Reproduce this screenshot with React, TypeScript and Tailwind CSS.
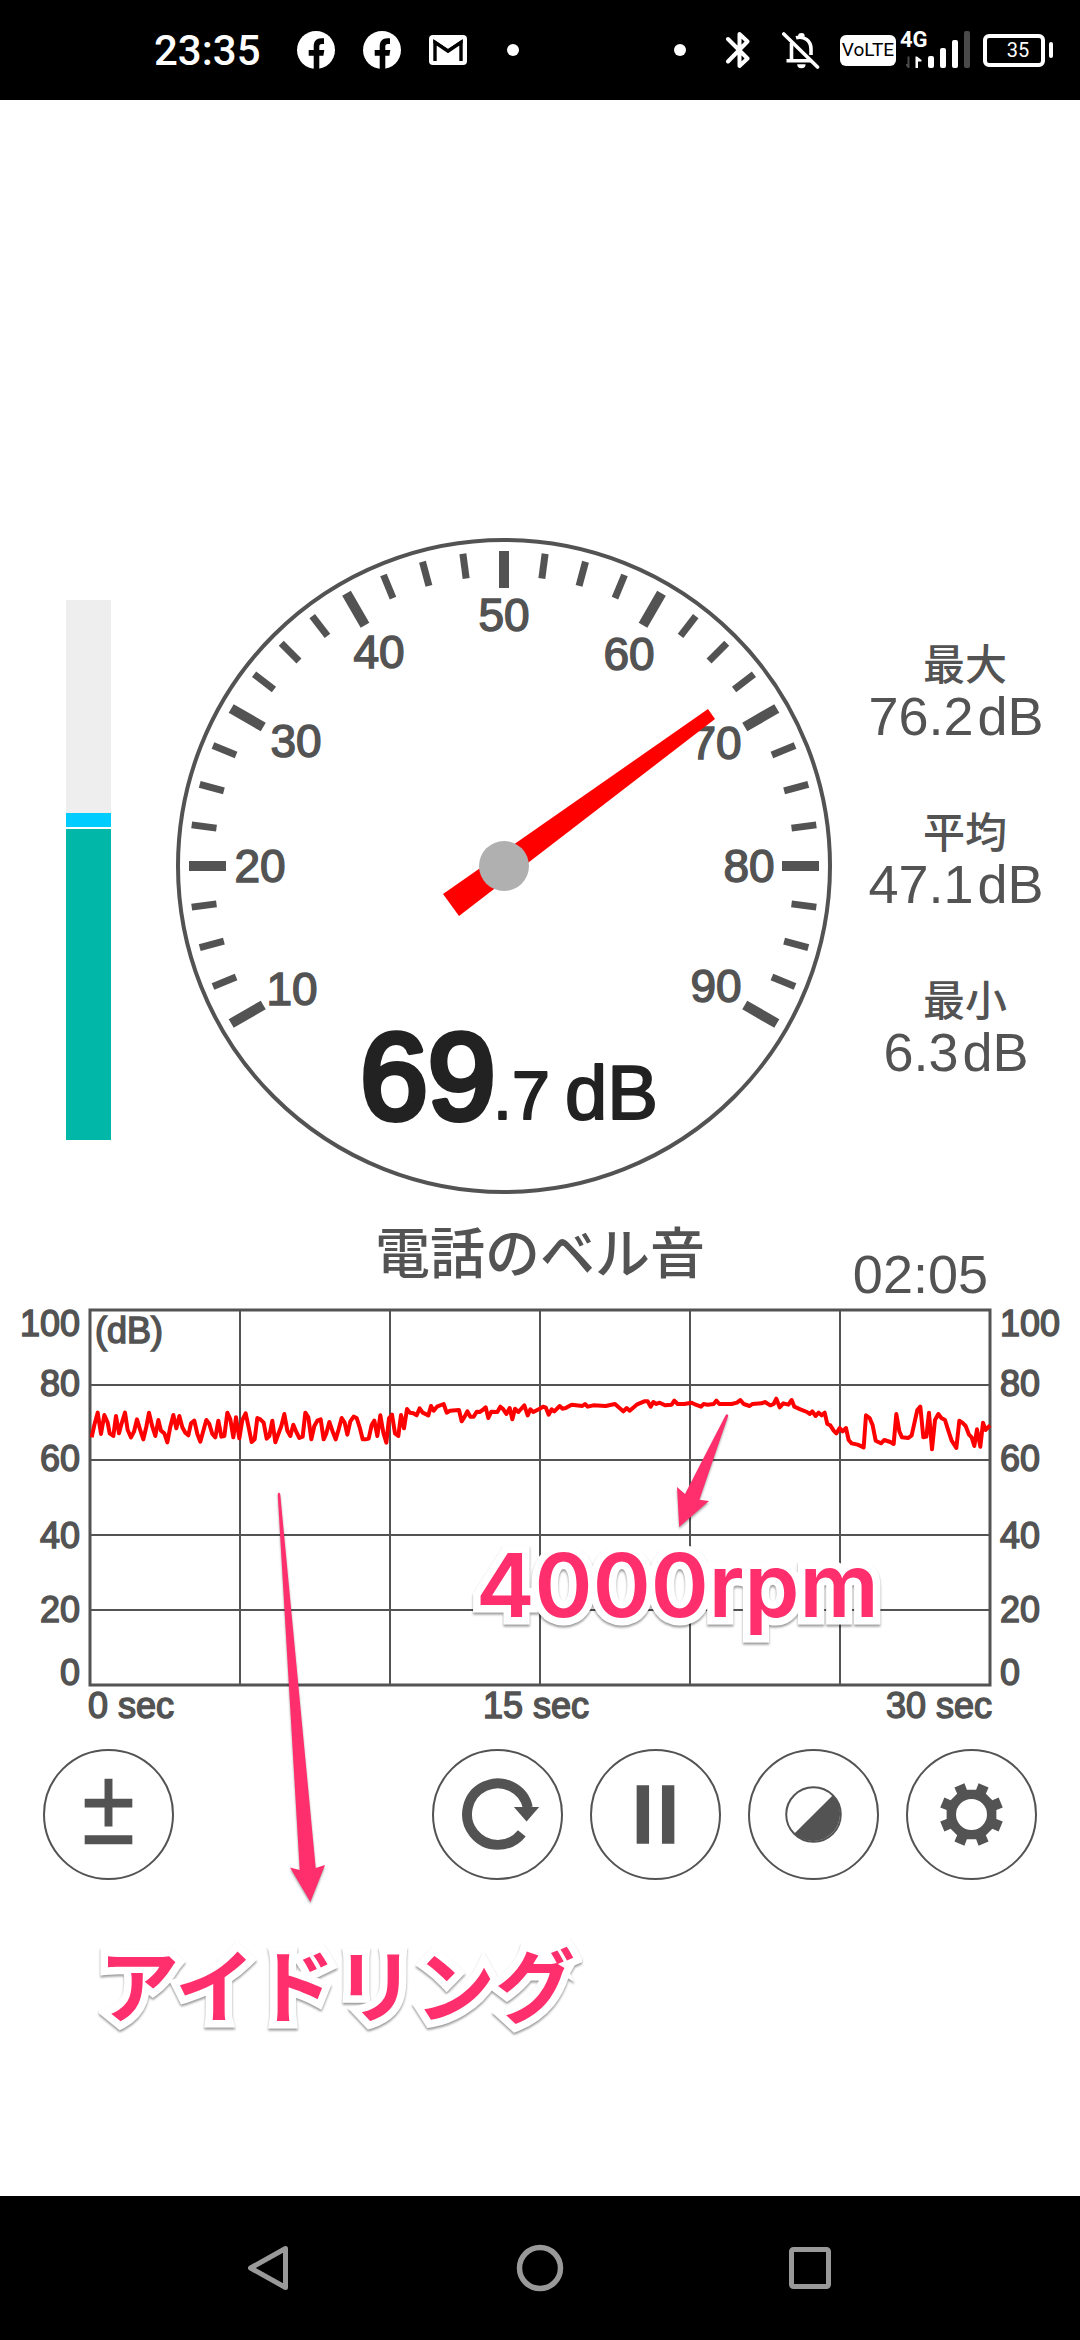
import React from "react";

const INK = "#535353";
const PINK = "#ff2e6c";

/* ---------- status bar ---------- */

function FacebookIcon() {
  return (
    <svg viewBox="0 0 38 38" className="size-[38px]" aria-label="Facebook">
      <circle cx="19" cy="19" r="19" fill="#fff" />
      <path
        d="M16.7 38V24.7H11.7V19H16.7V15.4C16.7 10.4 19.4 7.3 24.4 7.3H27V12.9H24.8C23 12.9 22.3 13.9 22.3 15.4V19H27.3L26.4 24.7H22.3V38Z"
        fill="#000"
      />
    </svg>
  );
}

function GmailIcon() {
  return (
    <svg viewBox="0 0 38 30" className="h-[30px] w-[38px]" aria-label="Gmail">
      <rect width="38" height="30" rx="4" fill="#fff" />
      <path d="M6 26V7.4L19 16.2L32 7.4V26" fill="none" stroke="#000" strokeWidth="3.4" />
      <path d="M4.4 4.2L19 14L33.6 4.2V8.2L19 17L4.4 8.2Z" fill="#000" />
    </svg>
  );
}

function BluetoothIcon() {
  return (
    <svg viewBox="0 0 24 38" className="h-[38px] w-6" aria-label="Bluetooth">
      <path
        d="M2 8L21.5 27.5L13.5 35V3L21.5 10.5L2 30.5"
        fill="none"
        stroke="#fff"
        strokeWidth="4"
        strokeLinecap="round"
        strokeLinejoin="round"
      />
    </svg>
  );
}

function MutedBellIcon() {
  return (
    <svg viewBox="0 0 38 38" className="size-[38px]" aria-label="Muted">
      <g fill="none" stroke="#fff" strokeWidth="3.6">
        <path d="M9.5 12V29.5M4.5 29.7H29" />
        <path d="M14 6.8C22 4.5 29 9.5 29 18V24" />
        <path d="M1.8 3L35.5 36" strokeLinecap="round" />
      </g>
      <path d="M16 5.5A3.4 3.4 0 0 1 22.8 5.5ZM15.2 33.2H23.6A4.2 4 0 0 1 15.2 33.2Z" fill="#fff" />
    </svg>
  );
}

function StatusBar() {
  return (
    <header className="flex h-[100px] items-center justify-between bg-black pr-[27px] pl-[154px] text-white">
      <div className="flex items-center">
        <time className="font-[Roboto,sans-serif] text-[42px] font-medium">23:35</time>
        <div className="ml-9 flex items-center gap-7">
          <FacebookIcon />
          <FacebookIcon />
          <GmailIcon />
        </div>
        <span className="ml-10 size-3 rounded-full bg-white" />
      </div>
      <div className="flex items-center">
        <span className="mr-10 size-3 rounded-full bg-white" />
        <BluetoothIcon />
        <div className="mr-5 ml-8">
          <MutedBellIcon />
        </div>
        <span className="flex h-[31px] w-14 items-center justify-center rounded-md bg-white font-[Roboto,sans-serif] text-[19px] text-black">
          VoLTE
        </span>
        <div className="relative ml-1 h-10 w-[71px]">
          <svg viewBox="0 0 71 40" className="h-10 w-[71px]" aria-label="Signal">
            <path d="M9.5 26.5V38H8L6 35.5V34H7.5V26.5Z" fill="#4a4a4a" />
            <path d="M15.5 38V26.5H17L21.5 30V31.5H18V38Z" fill="#fff" />
            <rect x="28" y="26" width="6" height="12" rx="2" fill="#fff" />
            <rect x="40" y="18" width="6" height="20" rx="2" fill="#fff" />
            <rect x="52" y="10" width="6" height="28" rx="2" fill="#fff" />
            <rect x="64" y="1" width="6" height="37" rx="2" fill="#4a4a4a" />
          </svg>
          <span className="absolute top-0 left-0 font-[Roboto,sans-serif] text-[22px] leading-5 font-bold">4G</span>
        </div>
        <span className="ml-3 flex h-[33px] w-[62px] items-center justify-center rounded-md border-4 border-white pl-2 font-[Roboto,sans-serif] text-xl">
          35
        </span>
        <span className="ml-1 h-4 w-1 rounded-sm bg-white" />
      </div>
    </header>
  );
}

/* ---------- gauge ---------- */

const DIAL_LABELS = [
  { text: "10", x: 292, y: 989 },
  { text: "20", x: 260, y: 866 },
  { text: "30", x: 296, y: 741 },
  { text: "40", x: 379, y: 652 },
  { text: "50", x: 504, y: 615 },
  { text: "60", x: 629, y: 654 },
  { text: "70", x: 716, y: 743 },
  { text: "80", x: 749, y: 866 },
  { text: "90", x: 716, y: 986 },
];

const TICKS = Array.from({ length: 33 }, (_, i) => ({
  angle: -120 + i * 7.5,
  major: i % 4 === 0,
}));

function Gauge() {
  return (
    <svg viewBox="176 538 656 656" className="w-full" role="img" aria-label="69.7 dB">
      <circle cx="504" cy="866" r="326" fill="none" stroke={INK} strokeWidth="4" />
      {TICKS.map(({ angle, major }) => (
        <line
          key={angle}
          x1="504"
          x2="504"
          y1="551"
          y2={major ? 588 : 576}
          stroke={INK}
          strokeWidth={major ? 10 : 7}
          transform={`rotate(${angle} 504 866)`}
        />
      ))}
      <g
        fill={INK}
        stroke={INK}
        strokeWidth="1.5"
        fontSize="46"
        textAnchor="middle"
        className="font-['Liberation_Sans',sans-serif]"
      >
        {DIAL_LABELS.map(({ text, x, y }) => (
          <text key={text} x={x} y={y + 16}>
            {text}
          </text>
        ))}
      </g>
      <path d="M708 709L715 719L459 916L443 894Z" fill="#ff0000" />
      <circle cx="504" cy="866" r="25" fill="#b0b0b0" />
      <g
        fill="#222"
        stroke="#222"
        strokeLinejoin="round"
        className="font-['Liberation_Sans',sans-serif]"
      >
        <text x="360" y="1119" fontSize="122" strokeWidth="6">
          69
        </text>
        <text x="493" y="1119" fontSize="68" strokeWidth="2">
          .7
        </text>
        <text x="565" y="1119" fontSize="76" strokeWidth="2">
          dB
        </text>
      </g>
    </svg>
  );
}

function LevelBar() {
  return (
    <div className="flex h-[540px] w-[45px] flex-col" role="img" aria-label="Level">
      <div className="flex-[213] bg-[#eeeeee]" />
      <div className="mb-0.5 flex-[14] bg-[#00ccff]" />
      <div className="flex-[311] bg-[#00b7a8]" />
    </div>
  );
}

function Stat({ label, value }: { label: string; value: string }) {
  return (
    <div className="flex flex-col items-center">
      <dt className="pl-[18px] font-['Noto_Sans_CJK_JP',sans-serif] text-[42px] leading-[52px] font-medium">
        {label}
      </dt>
      <dd className="flex gap-1 text-[54px] leading-[56px]">
        <span>{value}</span>
        <span>dB</span>
      </dd>
    </div>
  );
}

/* ---------- history chart ---------- */

/* Trace vertices, in thirds of a chart unit, counted from (85, 90). */
const TRACE =
  "20,142 28,105 38,68 48,132 58,75 68,98 74,130 85,138 93,78 102,130 110,100 120,68 128,120 138,142 147,125 156,88 165,118 175,148 184,110 192,68 202,110 211,138 220,90 228,122 238,130 247,157 256,110 265,75 274,115 283,78 292,112 301,128 310,136 318,100 328,92 337,132 346,155 355,122 364,90 373,102 382,132 391,142 400,92 409,140 418,138 427,68 436,88 445,142 453,82 463,145 472,90 482,70 491,112 500,156 509,148 517,84 526,88 536,98 545,146 553,138 562,92 571,157 580,132 589,108 598,72 607,122 616,138 625,104 634,126 643,144 653,140 661,68 670,82 679,148 688,108 697,92 707,88 716,148 724,130 733,96 742,122 752,148 761,118 770,84 779,98 787,134 796,94 806,80 815,84 824,112 833,148 842,148 851,146 860,105 868,92 877,138 886,76 895,128 904,158 912,85 921,74 930,130 940,138 948,75 957,115 966,57 975,68 985,70 995,76 1004,55 1013,68 1030,76 1038,48 1046,62 1056,50 1076,42 1085,68 1095,62 1122,60 1130,94 1139,80 1147,64 1156,80 1166,80 1175,65 1184,66 1193,60 1202,52 1210,84 1219,65 1237,66 1246,50 1255,58 1264,72 1274,54 1282,88 1290,56 1300,66 1318,46 1328,76 1336,58 1345,66 1364,56 " +
  "1374,50 1382,52 1391,74 1400,58 1408,64 1424,48 1432,56 1442,54 1460,44 1492,48 1500,42 1508,50 1525,46 1562,48 1590,42 1606,56 1615,64 1625,54 1634,62 1655,44 1678,34 1688,34 1697,50 1705,36 1714,42 1724,38 1740,46 1760,44 1768,32 1778,42 1798,42 1820,38 1832,44 1848,50 1856,42 1868,44 1886,42 1894,32 1903,42 1940,42 1956,38 1966,30 1976,42 1994,48 2002,42 2030,40 2040,36 2056,46 2066,42 2074,26 2084,52 2095,40 2110,44 2120,30 2128,50 2146,58 2166,66 2174,72 2182,64 2192,78 2201,68 2210,76 2219,68 2227,102 2236,106 2246,122 2254,130 2264,114 2273,124 2283,114 2291,150 2300,160 2318,164 2336,172 2343,76 2354,84 2363,106 2372,152 2388,160 2398,150 2416,156 2426,162 2434,72 2443,124 2451,142 2470,144 2480,136 2488,100 2497,60 2506,50 2515,142 2524,140 2532,68 2541,178 2550,90 2560,72 2569,84 2580,90 2590,122 2600,152 2614,174 2623,92 2632,98 2642,108 2652,134 2660,142 2668,168 2676,118 2686,170 2694,98 2702,120 2715,106";

const Y_LABELS = [
  { text: "100", y: 23 },
  { text: "80", y: 83 },
  { text: "60", y: 158 },
  { text: "40", y: 235 },
  { text: "20", y: 309 },
  { text: "0", y: 372 },
];

function HistoryChart() {
  return (
    <svg viewBox="0 0 1080 434" className="w-full" role="img" aria-label="Sound level over 30 sec">
      <g stroke={INK} strokeWidth="2">
        {[240, 390, 540, 690, 840].map((x) => (
          <line key={x} x1={x} x2={x} y1="10" y2="385" />
        ))}
        {[85, 160, 235, 310].map((y) => (
          <line key={y} x1="90" x2="990" y1={y} y2={y} />
        ))}
      </g>
      <rect x="90" y="10" width="900" height="375" fill="none" stroke={INK} strokeWidth="3" />
      <g
        fill={INK}
        stroke={INK}
        strokeWidth="1.5"
        fontSize="36"
        className="font-['Liberation_Sans',sans-serif]"
      >
        {Y_LABELS.map(({ text, y }) => (
          <React.Fragment key={text}>
            <text x="80" y={y + 13} textAnchor="end">
              {text}
            </text>
            <text x="1000" y={y + 13}>
              {text}
            </text>
          </React.Fragment>
        ))}
        <text x="95" y="43">
          (dB)
        </text>
        <text x="88" y="418">
          0 sec
        </text>
        <text x="536" y="418" textAnchor="middle">
          15 sec
        </text>
        <text x="992" y="418" textAnchor="end">
          30 sec
        </text>
      </g>
      <g transform="translate(85 90) scale(0.33333)">
        <polyline points={TRACE} fill="none" stroke="#ff0000" strokeWidth="12" strokeLinejoin="round" />
      </g>
    </svg>
  );
}

/* ---------- toolbar ---------- */

function RoundButton({ label, children }: { label: string; children: React.ReactNode }) {
  return (
    <button
      type="button"
      aria-label={label}
      className="size-[131px] rounded-full border-2 border-[#535353] bg-white"
    >
      <svg viewBox="-64 -64 128 128" className="size-full" fill={INK}>
        {children}
      </svg>
    </button>
  );
}

const GEAR_PATH =
  Array.from({ length: 8 }, (_, k) => {
    const centre = 22.5 + k * 45;
    const at = (r: number, deg: number) => {
      const a = ((centre + deg) * Math.PI) / 180;
      return `${(r * Math.sin(a)).toFixed(2)} ${(-r * Math.cos(a)).toFixed(2)}`;
    };
    return `${k ? "L" : "M"}${at(25.5, -12)}L${at(32.3, -9.7)}L${at(32.3, 9.7)}L${at(25.5, 12)}`;
  }).join("") + "ZM0 -15.6A15.6 15.6 0 1 0 0 15.6A15.6 15.6 0 1 0 0 -15.6Z";

function Toolbar() {
  return (
    <div className="flex justify-between px-[43px]">
      <RoundButton label="Calibrate">
        <path d="M-4 -36H4V-16H24V-7H4V12H-4V-7H-24V-16H-4ZM-24 21H24V30H-24Z" />
      </RoundButton>
      <div className="flex gap-[27px]">
        <RoundButton label="Restart">
          <path d="M24.5 19A31 31 0 1 1 30.6 -7" fill="none" stroke={INK} strokeWidth="10" />
          <path d="M16.5 -7.5H42L29.3 7Z" />
        </RoundButton>
        <RoundButton label="Pause">
          <path d="M-19 -29.5H-6.5V29.5H-19ZM6.5 -29.5H19V29.5H6.5Z" />
        </RoundButton>
        <RoundButton label="Theme">
          <circle r="27.5" fill="none" stroke={INK} strokeWidth="2" />
          <path d="M19.5 -19.5A27.6 27.6 0 0 1 -19.5 19.5Z" />
        </RoundButton>
        <RoundButton label="Settings">
          <path d={GEAR_PATH} fillRule="evenodd" />
        </RoundButton>
      </div>
    </div>
  );
}

/* ---------- annotations ---------- */

function Arrows() {
  return (
    <svg
      viewBox="0 0 1080 640"
      className="pointer-events-none absolute inset-x-0 top-0 w-full drop-shadow-[0_2px_1px_rgba(0,0,0,0.35)]"
      fill={PINK}
      aria-hidden="true"
    >
      <path d="M725.5 115.5Q727 113 728.3 115.5L699.4 199.8L709 201L679.2 227L677 187L685 194Z" />
      <path d="M277.7 194Q279 191 280.2 194L315.7 568L325 565L310.4 602L290 567.5L299.7 570Z" />
    </svg>
  );
}

const OUTLINED =
  "text-[#ff2e6c] [-webkit-text-stroke:15px_white] [paint-order:stroke_fill] [stroke-linejoin:round] drop-shadow-[0_2px_1px_rgba(0,0,0,0.4)]";

/* ---------- system navigation ---------- */

function NavigationBar() {
  return (
    <nav className="flex h-36 items-center justify-around bg-black px-[135px]">
      <button type="button" aria-label="Back">
        <svg viewBox="0 0 48 48" className="size-12" fill="none" stroke="#999" strokeWidth="5" strokeLinejoin="round">
          <path d="M39.5 4.5V43.5L4.5 24Z" />
        </svg>
      </button>
      <button type="button" aria-label="Home">
        <svg viewBox="0 0 48 48" className="size-12" fill="none" stroke="#999" strokeWidth="5.5">
          <circle cx="24" cy="24" r="20.5" />
        </svg>
      </button>
      <button type="button" aria-label="Recents">
        <svg viewBox="0 0 48 48" className="size-12" fill="none" stroke="#999" strokeWidth="5">
          <rect x="5.5" y="5.5" width="37" height="37" rx="2" />
        </svg>
      </button>
    </nav>
  );
}

export default function App() {
  return (
    <div className="flex min-h-screen flex-col bg-white font-['Liberation_Sans',sans-serif] text-[#535353]">
      <StatusBar />
      <main className="flex-1 pt-[438px]">
        <section className="grid grid-cols-[176fr_656fr_248fr] items-center">
          <div className="flex justify-center pt-2">
            <LevelBar />
          </div>
          <Gauge />
          <dl className="flex flex-col gap-[60px] pb-4">
            <Stat label="最大" value="76.2" />
            <Stat label="平均" value="47.1" />
            <Stat label="最小" value="6.3" />
          </dl>
        </section>
        <div className="grid grid-cols-[1fr_auto_1fr] items-end px-[92px] pt-[18px]">
          <h1 className="col-start-2 pb-3.5 font-['Noto_Sans_CJK_JP',sans-serif] text-[55px] leading-[74px] font-medium">
            電話のベル音
          </h1>
          <time className="text-right text-[54px] leading-[52px]">02:05</time>
        </div>
        <div className="relative">
          <HistoryChart />
          <p
            className={`absolute top-[228px] left-[476px] font-[Inter,sans-serif] text-[88px] leading-[114px] font-semibold ${OUTLINED}`}
          >
            4000rpm
          </p>
          <div className="pt-[15px]">
            <Toolbar />
          </div>
          <Arrows />
        </div>
        <p
          className={`pt-[46px] pl-[99px] font-['Noto_Sans_CJK_JP',sans-serif] text-[80px] leading-[110px] font-bold ${OUTLINED}`}
        >
          アイドリング
        </p>
      </main>
      <NavigationBar />
    </div>
  );
}
